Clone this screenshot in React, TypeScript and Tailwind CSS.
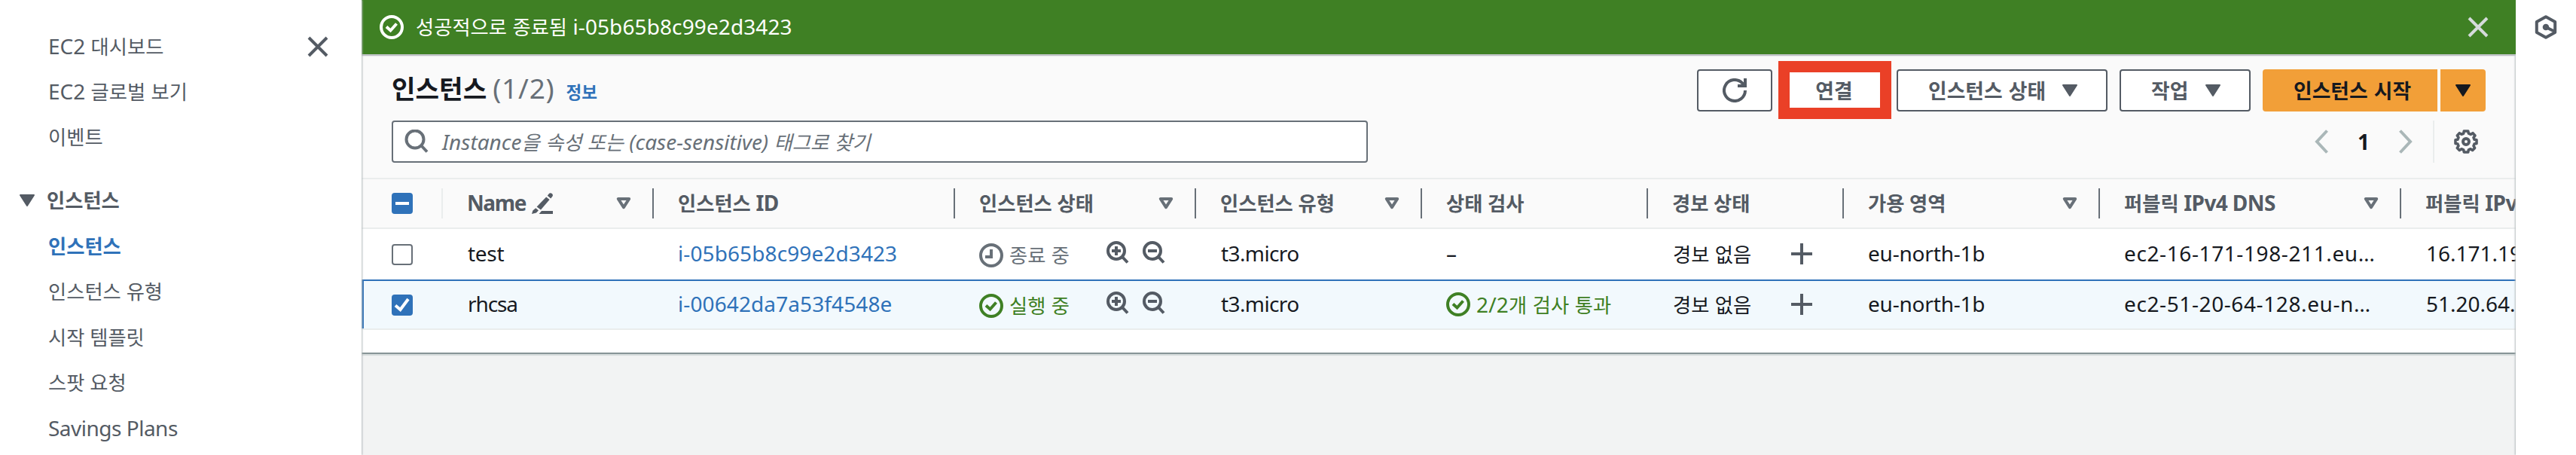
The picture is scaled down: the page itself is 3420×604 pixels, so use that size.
import { Fragment, type ReactNode } from "react";
import clsx from "clsx";

const HANGUL = /([가-힣]+)/;

// Hangul and Latin runs use different families and slightly different sizes
function Text({ children, className }: { children: string; className?: string }) {
  return (
    <span className={clsx("whitespace-pre", className)}>
      {children.split(HANGUL).map((run, i) =>
        HANGUL.test(run) ? (
          <span key={i} className="font-['Noto_Sans_CJK_KR',sans-serif] text-[0.94em] tracking-normal">
            {run}
          </span>
        ) : (
          <Fragment key={i}>{run}</Fragment>
        )
      )}
    </span>
  );
}

function CloseIcon({ className }: { className?: string }) {
  return (
    <svg viewBox="0 0 32 32" className={clsx("h-8 w-8 shrink-0", className)} fill="none" stroke="currentColor" strokeWidth="4">
      <path d="M4 4 28 28M28 4 4 28" />
    </svg>
  );
}

function CheckCircle() {
  return (
    <svg viewBox="0 0 32 32" className="h-8 w-8 shrink-0" fill="none" stroke="currentColor" strokeWidth="4">
      <circle cx="16" cy="16" r="14" />
      <path d="M9 15.5 14.5 20.5 22.5 11.5" />
    </svg>
  );
}

function ClockIcon() {
  return (
    <svg viewBox="0 0 32 32" className="h-8 w-8 shrink-0" fill="none" stroke="currentColor" strokeWidth="4">
      <circle cx="16" cy="16" r="14" />
      <path d="M16 8V18H8" />
    </svg>
  );
}

function ZoomIcon({ plus }: { plus?: boolean }) {
  return (
    <svg viewBox="0 0 30 30" className="h-[30px] w-[30px] shrink-0 text-[#545b64]" fill="none" stroke="currentColor" strokeWidth="4">
      <circle cx="13" cy="13" r="11" />
      <path d="M20.5 20.5 28 28.5M7 13H19" />
      {plus && <path d="M13 7V19" />}
    </svg>
  );
}

function Caret({ className }: { className?: string }) {
  return (
    <svg viewBox="0 0 20 16" className={clsx("h-4 w-5 shrink-0", className)} fill="currentColor" stroke="currentColor" strokeWidth="2" strokeLinejoin="round">
      <path d="M1 1H19L10 15Z" />
    </svg>
  );
}

function SortIcon() {
  return (
    <svg viewBox="0 0 20 16" className="h-4 w-5 shrink-0 text-[#687078]" fill="none" stroke="currentColor" strokeWidth="4" strokeLinejoin="round">
      <path d="M2.8 2H17.2L10 13.2Z" />
    </svg>
  );
}

function PencilIcon() {
  return (
    <svg viewBox="0 0 28 28" className="ml-2 h-7 w-7 shrink-0" fill="currentColor">
      <path d="M22.5 1.5Q24.5-.8 26.8 1 29 3 27 5.2L25.2 7.4 20.8 3.8ZM19.2 5.4 23.6 9 12 22.4 6.6 18.6ZM5.2 20.2 9 23.2 6 26.4 0 28 1.4 23.6ZM13 24H28V28H9.6Z" />
    </svg>
  );
}

function GearIcon() {
  return (
    <svg viewBox="0 0 32 32" className="h-8 w-8 shrink-0" fill="none" stroke="currentColor" strokeWidth="3.6" strokeLinejoin="round">
      <path d="M13.3 2H18.7L19.4 5.2 22.2 6.4 25 4.7 28 8 26 10.6 27.1 13.2 30 13.8V18.4L27.1 19 26 21.6 27.6 24.4 24.6 27.5 22 25.7 19.4 26.8 18.7 30H13.3L12.7 26.8 10 25.7 7.3 27.5 4.3 24.4 6 21.6 4.9 19 2 18.4V13.8L4.9 13.2 6 10.6 4.3 8 7.3 4.7 10 6.2 12.7 5.2Z" />
      <circle cx="16" cy="16" r="4" strokeWidth="4" />
    </svg>
  );
}

function Checkbox({ state }: { state: "off" | "on" | "mixed" }) {
  if (state === "off") return <span className="h-7 w-7 rounded-[4px] border-2 border-[#687078] bg-white" />;
  return (
    <span className="h-7 w-7 rounded-[4px] bg-[#2f72b9] text-white">
      <svg viewBox="0 0 28 28" className="h-7 w-7" fill="none" stroke="currentColor" strokeWidth="4">
        {state === "on" ? <path d="M5 14.5 11.5 20 22 6" /> : <path d="M5 14H23" />}
      </svg>
    </span>
  );
}

const topLinks = ["EC2 대시보드", "EC2 글로벌 보기", "이벤트"];
const instanceLinks = ["인스턴스", "인스턴스 유형", "시작 템플릿", "스팟 요청", "Savings Plans"];

function Sidebar() {
  return (
    <aside className="relative z-30 flex w-[480px] shrink-0 flex-col bg-white pt-[31px] text-[28px] leading-[60px] text-[#545b64] shadow-[1px_0_2px_#b4bcbe]">
      <div className="flex">
        <ul className="w-[343px] pl-16">
          {topLinks.map((label) => (
            <li key={label} className="h-[60px]">
              <Text>{label}</Text>
            </li>
          ))}
        </ul>
        <CloseIcon className="ml-[63px] mt-[15px]" />
      </div>
      <div className="mt-[25px] flex h-[60px] items-center pl-[26px] font-bold">
        <Caret />
        <Text className="ml-4 pb-[3px]">인스턴스</Text>
      </div>
      <ul className="pl-16">
        {instanceLinks.map((label) => (
          <li key={label} className={clsx("h-[60.4px]", label === "인스턴스" && "font-bold text-[#2f72b9]")}>
            <Text className="tracking-[-0.5px]">{label}</Text>
          </li>
        ))}
      </ul>
    </aside>
  );
}

const buttonBase = "flex h-14 items-center rounded-[4px] border-2 border-[#545b64] bg-white px-10 text-[#545b64]";

function Toolbar() {
  return (
    <div className="flex h-14 text-[28.5px] font-bold leading-[52px]">
      <button className="flex h-14 w-[100px] items-center justify-center rounded-[4px] border-2 border-[#545b64] bg-white text-[#545b64]">
        <svg viewBox="0 0 32 32" className="h-8 w-8" fill="none" stroke="currentColor" strokeWidth="4">
          <path d="M30 16A14 14 0 1 1 26 6.2L30 10" />
          <path d="M30 0V10H20" />
        </svg>
      </button>
      <div className="-mt-[11px] ml-2 flex h-[77px] w-[150px] items-center justify-center border-[15px] border-[#ea4027] bg-white pr-0.5 text-[#545b64]">
        <Text>연결</Text>
      </div>
      <button className={clsx(buttonBase, "ml-[7px] w-[280px] justify-between")}>
        <Text className="tracking-[0.8px]">인스턴스 상태</Text>
        <Caret className="-mr-0.5" />
      </button>
      <button className={clsx(buttonBase, "ml-4 w-[174px] justify-between")}>
        <Text>작업</Text>
        <Caret className="-mr-0.5" />
      </button>
      <button className="ml-4 flex h-14 w-[232px] items-center rounded-l-[4px] bg-[#f29f38] pl-[41px] text-[#16191f]">
        <Text className="tracking-[0.8px]">인스턴스 시작</Text>
      </button>
      <button className="ml-1 flex h-14 w-[60px] items-center justify-center rounded-r-[4px] bg-[#f29f38] text-[#16191f]">
        <Caret />
      </button>
    </div>
  );
}

function Pagination() {
  return (
    <div className="flex h-14 items-center text-[#aab7b8]">
      <svg viewBox="0 0 18 32" className="h-8 w-[18px]" fill="none" stroke="currentColor" strokeWidth="4">
        <path d="M16.5 1.5 3 16 16.5 30.5" />
      </svg>
      <span className="w-[94px] text-center text-[28px] font-bold leading-[56px] text-[#16191f]">1</span>
      <svg viewBox="0 0 18 32" className="h-8 w-[18px]" fill="none" stroke="currentColor" strokeWidth="4">
        <path d="M1.5 1.5 15 16 1.5 30.5" />
      </svg>
      <div className="ml-[27px] flex h-14 w-[70px] items-center border-l-2 border-[#eaeded] pl-[26px] text-[#545b64]">
        <GearIcon />
      </div>
    </div>
  );
}

const gridCols = "grid grid-cols-[108px_280px_400px_320px_300px_300px_260px_340px_400px_400px] w-[3108px]";

const columns = [
  { label: "Name", sort: true, edit: true },
  { label: "인스턴스 ID" },
  { label: "인스턴스 상태", sort: true },
  { label: "인스턴스 유형", sort: true },
  { label: "상태 검사" },
  { label: "경보 상태" },
  { label: "가용 영역", sort: true },
  { label: "퍼블릭 IPv4 DNS", sort: true },
  { label: "퍼블릭 IPv4 주소" },
];

interface Instance {
  name: string;
  id: string;
  running: boolean;
  checks?: string;
  dns: string;
  ip: string;
}

const instances: Instance[] = [
  { name: "test", id: "i-05b65b8c99e2d3423", running: false, dns: "ec2-16-171-198-211.eu…", ip: "16.171.198.211" },
  { name: "rhcsa", id: "i-00642da7a53f4548e", running: true, checks: "2/2개 검사 통과", dns: "ec2-51-20-64-128.eu-n…", ip: "51.20.64.128" },
];

function Cell({ children, className }: { children: ReactNode; className?: string }) {
  return <div className={clsx("flex items-center pl-[33px]", className)}>{children}</div>;
}

function InstanceRow({ item }: { item: Instance }) {
  const { running } = item;
  return (
    <div
      className={clsx(
        gridCols,
        "text-[28px] leading-[40px] text-[#16191f]",
        running
          ? "h-[65px] border-b-2 border-[#eaeded] bg-[#f2f9fd] shadow-[inset_3px_0_0_#2f72b9]"
          : "h-[69px] border-b-2 border-[#2f72b9] bg-white"
      )}
    >
      <div className="flex items-center pl-10">
        <Checkbox state={running ? "on" : "off"} />
      </div>
      <Cell>
        <Text className={clsx("pb-[3px]", running ? "tracking-[-1.1px]" : "tracking-[-0.3px]")}>{item.name}</Text>
      </Cell>
      <Cell className="-ml-px text-[#2f72b9]">
        <Text className="pb-[3px] tracking-[0.1px]">{item.id}</Text>
      </Cell>
      <Cell className={clsx("-ml-px pt-0.5", running ? "text-[#3f8024]" : "text-[#687078]")}>
        {running ? <CheckCircle /> : <ClockIcon />}
        <Text className="ml-2 w-[129px] pb-px">{running ? "실행 중" : "종료 중"}</Text>
        <div className="-mt-[7px] flex gap-[18px]">
          <ZoomIcon plus />
          <ZoomIcon />
        </div>
      </Cell>
      <Cell>
        <Text className="pb-[3px] tracking-[-0.6px]">t3.micro</Text>
      </Cell>
      <Cell className={clsx("-ml-px", item.checks ? "gap-2 pb-px text-[#3f8024]" : "pb-[3px]")}>
        {item.checks && <CheckCircle />}
        <Text className="tracking-[0.2px]">{item.checks ?? "–"}</Text>
      </Cell>
      <Cell>
        <Text className="w-[157px] pb-px">경보 없음</Text>
        <svg viewBox="0 0 28 28" className="mb-px h-7 w-7 text-[#545b64]" fill="none" stroke="currentColor" strokeWidth="4">
          <path d="M14 0V28M0 14H28" />
        </svg>
      </Cell>
      <Cell className="-ml-px">
        <Text className="pb-[3px] tracking-[-0.2px]">eu-north-1b</Text>
      </Cell>
      <Cell className="-ml-px">
        <Text className="pb-[3px] tracking-[0.6px]">{item.dns}</Text>
      </Cell>
      <Cell>
        <Text className="pb-[3px]">{item.ip}</Text>
      </Cell>
    </div>
  );
}

function InstanceTable() {
  return (
    <>
      <div className={clsx(gridCols, "h-[68px] items-center border-y-2 border-[#eaeded] bg-[#fafafa] text-[28px] font-bold leading-[38px] text-[#545b64]")}>
        <div className="flex h-10 items-center border-r-2 border-[#eaeded] pl-10">
          <Checkbox state="mixed" />
        </div>
        {columns.map((col) => (
          <div key={col.label} className="flex h-10 items-center border-r-2 border-[#687078] pl-8">
            <Text className={clsx("pb-[2px]", col.edit ? "tracking-[-1.4px]" : "tracking-[-0.6px]")}>{col.label}</Text>
            {col.edit && <PencilIcon />}
            {col.sort && (
              <span className="ml-auto mr-7">
                <SortIcon />
              </span>
            )}
          </div>
        ))}
      </div>
      {instances.map((item) => (
        <InstanceRow key={item.id} item={item} />
      ))}
      <div className="h-[30px] bg-white" />
    </>
  );
}

export default function App() {
  return (
    <div className="flex h-[604px] w-[3420px] overflow-hidden bg-white font-['Noto_Sans','Noto_Sans_CJK_KR',sans-serif]">
      <Sidebar />
      <main className="h-[604px] w-[2860px] shrink-0 overflow-hidden bg-[#f2f3f3]">
        <div className="relative z-20 flex h-[72px] items-center bg-[#3f8024] pl-6 pr-[34px] text-[28px] leading-[70px] text-white shadow-[0_2px_2px_#c9ccd0]">
          <CheckCircle />
          <Text className="ml-4 pb-[2px] tracking-[0.1px]">성공적으로 종료됨 i-05b65b8c99e2d3423</Text>
          <CloseIcon className="ml-auto text-[#d5dbdb]" />
        </div>
        <section className="overflow-hidden border-b-2 border-[#879596] bg-[#fafafa] shadow-[0_2px_1px_#d5dbdb]">
          <div className="flex h-[164px] flex-col border-t-2 border-[#999da2] px-10 pt-[18px]">
            <div className="flex h-14 justify-between">
              <h1 className="-mt-[4px] flex items-baseline text-[36px] leading-[56px]">
                <Text className="text-[36.5px] font-bold text-[#16191f]">인스턴스</Text>
                <Text className="ml-[8px] text-[37px] tracking-[0.8px] text-[#687078]">(1/2)</Text>
                <Text className="ml-[15px] text-[24px] font-bold text-[#2f72b9]">정보</Text>
              </h1>
              <Toolbar />
            </div>
            <div className="mt-3 flex justify-between">
              <div className="flex h-14 w-[1296px] items-center rounded-[4px] border-2 border-[#687078] bg-white pl-[15px] text-[#687078]">
                <svg viewBox="0 0 32 32" className="h-8 w-8" fill="none" stroke="currentColor" strokeWidth="4">
                  <circle cx="14" cy="13" r="11.5" />
                  <path d="M22 21 30 29.5" />
                </svg>
                <Text className="ml-[18px] text-[28px] italic leading-[40px]">
                  Instance을 속성 또는 (case-sensitive) 태그로 찾기
                </Text>
              </div>
              <Pagination />
            </div>
          </div>
          <InstanceTable />
        </section>
      </main>
      <aside className="relative z-10 flex w-20 shrink-0 justify-center bg-white pt-5 shadow-[-1px_0_2px_#b4bcbe]">
        <svg viewBox="0 0 32 32" className="h-8 w-8 text-[#545b64]" fill="none" stroke="currentColor" strokeWidth="4" strokeLinejoin="round">
          <path d="M16 2.2 28.2 9V23L16 29.8 3.8 23V9Z" />
          <path d="M16 16 27 21.5" />
          <circle cx="16" cy="16" r="2.3" />
        </svg>
      </aside>
    </div>
  );
}
